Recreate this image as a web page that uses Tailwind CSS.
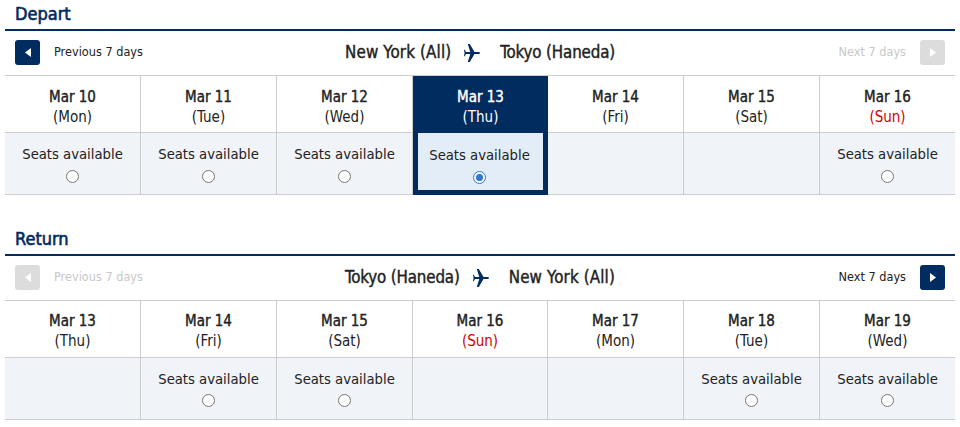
<!DOCTYPE html>
<html><head><meta charset="utf-8"><script src="https://cdn.jsdelivr.net/npm/@tailwindcss/browser@4"></script></head>
<body class="bg-white overflow-hidden font-['DejaVu_Sans',sans-serif] [font-stretch:condensed] text-[#222] w-[960px] h-[427px]">
<div class="mx-[5px] w-[950px]">
<section class="h-[225px]">
<h2 class="h-[31px] pl-[10px] pt-[1px] text-[#002c5f] text-[18px] leading-[26px] font-normal [-webkit-text-stroke:0.6px_#002c5f] border-b-2 border-[#002c5f]">Depart</h2>
<div class="h-[44px] pb-px px-[10px] flex items-center justify-between">
<div class="w-[200px] flex items-center gap-[14px] text-[12.6px]"><span class="size-[25px] rounded-[3px] bg-[#002c5f] flex items-center justify-center"><svg width="6" height="9" viewBox="0 0 6 9"><path d="M6 0v9L0 4.500z" fill="#fff"/></svg></span>Previous 7 days</div>
<div class="flex items-center text-[16.8px] [-webkit-text-stroke:0.4px_#222]"><span class="tracking-[0.15px]">New York (All)</span><svg class="ml-[13px] mr-[20px]" width="16" height="18" viewBox="0 0 16 18"><path fill="#002c5f" d="M16 9c0-.6-.8-1-1.600-1H10.500L5.800 0H3.800L6.300 8H2L.8 5.800H0L.6 9 0 12.200h.8L2 10h4.300L3.800 18h2L10.500 10h3.900C15.200 10 16 9.600 16 9z"/></svg><span class="tracking-[-0.15px]">Tokyo (Haneda)</span></div>
<div class="w-[200px] flex items-center justify-end gap-[14px] text-[12.6px] text-[#c8c8c8]">Next 7 days<span class="size-[25px] rounded-[3px] bg-[#dcdcdc] flex items-center justify-center"><svg width="6" height="9" viewBox="0 0 6 9"><path d="M0 0v9l6-4.500z" fill="#fff"/></svg></span></div>
</div>
<div class="grid grid-cols-[136px_136px_136px_135px_136px_136px_135px] grid-rows-[57px_61px] border-t border-b border-[#ccc] text-[15px]">
<div class="border-r border-b border-[#ccc] flex flex-col items-center pt-[11px] leading-[20px]"><b class="font-normal [-webkit-text-stroke:0.4px_#222]">Mar 10</b><span>(Mon)</span></div>
<div class="border-r border-b border-[#ccc] flex flex-col items-center pt-[11px] leading-[20px]"><b class="font-normal [-webkit-text-stroke:0.4px_#222]">Mar 11</b><span>(Tue)</span></div>
<div class="border-r border-b border-[#ccc] flex flex-col items-center pt-[11px] leading-[20px]"><b class="font-normal [-webkit-text-stroke:0.4px_#222]">Mar 12</b><span>(Wed)</span></div>
<div class="bg-[#002c5f] text-white flex flex-col items-center pt-[11px] leading-[20px]"><b class="font-normal [-webkit-text-stroke:0.4px_#fff]">Mar 13</b><span>(Thu)</span></div>
<div class="border-r border-b border-[#ccc] flex flex-col items-center pt-[11px] leading-[20px]"><b class="font-normal [-webkit-text-stroke:0.4px_#222]">Mar 14</b><span>(Fri)</span></div>
<div class="border-r border-b border-[#ccc] flex flex-col items-center pt-[11px] leading-[20px]"><b class="font-normal [-webkit-text-stroke:0.4px_#222]">Mar 15</b><span>(Sat)</span></div>
<div class="border-b border-[#ccc] flex flex-col items-center pt-[11px] leading-[20px]"><b class="font-normal [-webkit-text-stroke:0.4px_#222]">Mar 16</b><span class="text-[#d40000]">(Sun)</span></div>
<div class="bg-[#f0f3f8] border-r border-[#ccc] flex flex-col items-center pt-[10px] gap-[6px] leading-[21px] text-[14.7px]">Seats available<span class="size-[13px] rounded-full border border-[#767676] bg-white"></span></div>
<div class="bg-[#f0f3f8] border-r border-[#ccc] flex flex-col items-center pt-[10px] gap-[6px] leading-[21px] text-[14.7px]">Seats available<span class="size-[13px] rounded-full border border-[#767676] bg-white"></span></div>
<div class="bg-[#f0f3f8] border-r border-[#ccc] flex flex-col items-center pt-[10px] gap-[6px] leading-[21px] text-[14.7px]">Seats available<span class="size-[13px] rounded-full border border-[#767676] bg-white"></span></div>
<div class="bg-[#e3edf7] border-[5px] border-t-0 border-[#002c5f] mb-[-1px] pr-[2px] flex flex-col items-center pt-[11px] gap-[6px] leading-[21px] text-[14.7px]">Seats available<span class="size-[13px] rounded-full border border-[#2e76cf] bg-white p-[2px]"><span class="block size-full rounded-full bg-[#2e76cf]"></span></span></div>
<div class="bg-[#f0f3f8] border-r border-[#ccc]"></div>
<div class="bg-[#f0f3f8] border-r border-[#ccc]"></div>
<div class="bg-[#f0f3f8] flex flex-col items-center pt-[10px] gap-[6px] leading-[21px] text-[14.7px]">Seats available<span class="size-[13px] rounded-full border border-[#767676] bg-white"></span></div>
</div>
</section>
<section>
<h2 class="h-[31px] pl-[10px] pt-[1px] text-[#002c5f] text-[18px] leading-[26px] font-normal [-webkit-text-stroke:0.6px_#002c5f] border-b-2 border-[#002c5f]">Return</h2>
<div class="h-[44px] pb-px px-[10px] flex items-center justify-between">
<div class="w-[200px] flex items-center gap-[14px] text-[12.6px] text-[#c8c8c8]"><span class="size-[25px] rounded-[3px] bg-[#dcdcdc] flex items-center justify-center"><svg width="6" height="9" viewBox="0 0 6 9"><path d="M6 0v9L0 4.500z" fill="#fff"/></svg></span>Previous 7 days</div>
<div class="flex items-center text-[16.8px] [-webkit-text-stroke:0.4px_#222]"><span class="tracking-[-0.15px]">Tokyo (Haneda)</span><svg class="ml-[13px] mr-[20px]" width="16" height="18" viewBox="0 0 16 18"><path fill="#002c5f" d="M16 9c0-.6-.8-1-1.600-1H10.500L5.800 0H3.800L6.300 8H2L.8 5.800H0L.6 9 0 12.200h.8L2 10h4.300L3.800 18h2L10.500 10h3.900C15.200 10 16 9.600 16 9z"/></svg><span class="tracking-[0.15px]">New York (All)</span></div>
<div class="w-[200px] flex items-center justify-end gap-[14px] text-[12.6px]">Next 7 days<span class="size-[25px] rounded-[3px] bg-[#002c5f] flex items-center justify-center"><svg width="6" height="9" viewBox="0 0 6 9"><path d="M0 0v9l6-4.500z" fill="#fff"/></svg></span></div>
</div>
<div class="grid grid-cols-[136px_136px_136px_135px_136px_136px_135px] grid-rows-[57px_61px] border-t border-b border-[#ccc] text-[15px]">
<div class="border-r border-b border-[#ccc] flex flex-col items-center pt-[10px] leading-[20px]"><b class="font-normal [-webkit-text-stroke:0.4px_#222]">Mar 13</b><span>(Thu)</span></div>
<div class="border-r border-b border-[#ccc] flex flex-col items-center pt-[10px] leading-[20px]"><b class="font-normal [-webkit-text-stroke:0.4px_#222]">Mar 14</b><span>(Fri)</span></div>
<div class="border-r border-b border-[#ccc] flex flex-col items-center pt-[10px] leading-[20px]"><b class="font-normal [-webkit-text-stroke:0.4px_#222]">Mar 15</b><span>(Sat)</span></div>
<div class="border-r border-b border-[#ccc] flex flex-col items-center pt-[10px] leading-[20px]"><b class="font-normal [-webkit-text-stroke:0.4px_#222]">Mar 16</b><span class="text-[#d40000]">(Sun)</span></div>
<div class="border-r border-b border-[#ccc] flex flex-col items-center pt-[10px] leading-[20px]"><b class="font-normal [-webkit-text-stroke:0.4px_#222]">Mar 17</b><span>(Mon)</span></div>
<div class="border-r border-b border-[#ccc] flex flex-col items-center pt-[10px] leading-[20px]"><b class="font-normal [-webkit-text-stroke:0.4px_#222]">Mar 18</b><span>(Tue)</span></div>
<div class="border-b border-[#ccc] flex flex-col items-center pt-[10px] leading-[20px]"><b class="font-normal [-webkit-text-stroke:0.4px_#222]">Mar 19</b><span>(Wed)</span></div>
<div class="bg-[#f0f3f8] border-r border-[#ccc]"></div>
<div class="bg-[#f0f3f8] border-r border-[#ccc] flex flex-col items-center pt-[10px] gap-[5px] leading-[21px] text-[14.7px]">Seats available<span class="size-[13px] rounded-full border border-[#767676] bg-white"></span></div>
<div class="bg-[#f0f3f8] border-r border-[#ccc] flex flex-col items-center pt-[10px] gap-[5px] leading-[21px] text-[14.7px]">Seats available<span class="size-[13px] rounded-full border border-[#767676] bg-white"></span></div>
<div class="bg-[#f0f3f8] border-r border-[#ccc]"></div>
<div class="bg-[#f0f3f8] border-r border-[#ccc]"></div>
<div class="bg-[#f0f3f8] border-r border-[#ccc] flex flex-col items-center pt-[10px] gap-[5px] leading-[21px] text-[14.7px]">Seats available<span class="size-[13px] rounded-full border border-[#767676] bg-white"></span></div>
<div class="bg-[#f0f3f8] flex flex-col items-center pt-[10px] gap-[5px] leading-[21px] text-[14.7px]">Seats available<span class="size-[13px] rounded-full border border-[#767676] bg-white"></span></div>
</div>
</section>
</div>
</body></html>
